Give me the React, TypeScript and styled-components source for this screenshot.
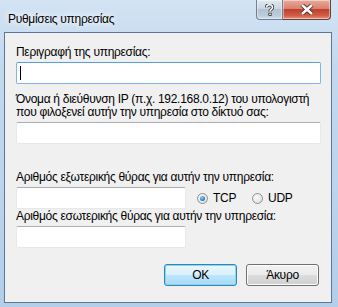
import React from "react";
import styled, { createGlobalStyle } from "styled-components";

const GlobalStyle = createGlobalStyle`
  html, body {
    margin: 0;
    padding: 0;
    background: #b9d1ea;
  }
`;

const Frame = styled.div`
  width: 338px;
  height: 307px;
  box-sizing: border-box;
  padding: 0 6px 4px 4px;
  display: flex;
  flex-direction: column;
  background: linear-gradient(180deg, #d3e3f4 0%, #c4d9ef 20%, #bcd4ed 60%, #b4cde9 100%);
  font-family: "Liberation Sans", Arial, sans-serif;
  font-size: 12px;
  letter-spacing: -0.3px;
  color: #000;
`;

const TitleBar = styled.div`
  height: 32px;
  display: flex;
  justify-content: space-between;
  align-items: flex-start;
`;

const Title = styled.div`
  margin: 12px 0 0 4px;
  font-size: 12px;
  line-height: 14px;
  color: #000;
  text-shadow: 0 0 6px #fff, 0 0 8px #fff;
`;

const Caption = styled.div`
  display: flex;
  margin-right: 1px;
`;

const CapButton = styled.div<{ $close?: boolean }>`
  width: ${(p) => (p.$close ? 48 : 27)}px;
  height: 20px;
  box-sizing: border-box;
  display: flex;
  align-items: center;
  justify-content: center;
  border: 1px solid ${(p) => (p.$close ? "#6b3a3a" : "#6e7f93")};
  border-top: none;
  border-radius: ${(p) => (p.$close ? "0 0 4px 0" : "0 0 0 4px")};
  ${(p) => (p.$close ? "border-left: none;" : "")}
  box-shadow: inset 0 0 0 1px rgba(255, 255, 255, 0.45);
  background: ${(p) =>
    p.$close
      ? "linear-gradient(180deg, #e9a99c 0%, #d9826f 45%, #c0412c 50%, #cf5b43 80%, #e0957f 100%)"
      : "linear-gradient(180deg, #e0e8f1 0%, #cad6e3 45%, #b3c3d5 50%, #bccbdb 80%, #d0dbe7 100%)"};
`;

const Client = styled.div`
  flex: 1;
  box-sizing: border-box;
  border: 1px solid #5a7798;
  background: #f0f0f0;
  padding: 0 10px 0 11px;
  display: flex;
  flex-direction: column;
`;

const Label = styled.div<{ $mt: number }>`
  margin-top: ${(p) => p.$mt}px;
  line-height: 13px;
  white-space: nowrap;
`;

const TextBox = styled.div<{ $w?: number; $focus?: boolean }>`
  width: ${(p) => (p.$w ? `${p.$w}px` : "100%")};
  height: 22px;
  box-sizing: border-box;
  background: #fff;
  border: 1px solid ${(p) => (p.$focus ? "#7eb4ea" : "#e3e9ef")};
  border-top-color: ${(p) => (p.$focus ? "#569de5" : "#abadb3")};
  border-radius: 2px;
  margin-top: 3px;
  display: flex;
  align-items: center;
  padding-left: 3px;
`;

const Caret = styled.div`
  width: 1px;
  height: 14px;
  background: #000;
`;

const PortRow = styled.div`
  display: flex;
  align-items: center;
  margin-top: 3px;
  & > ${TextBox} {
    margin-top: 0;
  }
`;

const Radio = styled.div`
  display: flex;
  align-items: center;
  gap: 5px;
  margin-left: 11px;
  & + & {
    margin-left: 16px;
  }
`;

const Dot = styled.div<{ $on?: boolean }>`
  width: 11px;
  height: 11px;
  box-sizing: border-box;
  border-radius: 50%;
  border: 1px solid #8e8f8f;
  background: radial-gradient(circle at 40% 35%, #fafafa 0%, #e4e4e4 70%, #d4d4d4 100%);
  display: flex;
  align-items: center;
  justify-content: center;
  &::after {
    content: "";
    display: ${(p) => (p.$on ? "block" : "none")};
    width: 5px;
    height: 5px;
    border-radius: 50%;
    background: radial-gradient(circle at 40% 35%, #8ad3ff 0%, #2c83c8 60%, #1a5d94 100%);
  }
`;

const Buttons = styled.div`
  display: flex;
  justify-content: flex-end;
  gap: 9px;
  margin-top: 16px;
  padding-right: 2px;
`;

const Button = styled.div<{ $default?: boolean }>`
  width: 73px;
  height: 22px;
  box-sizing: border-box;
  border-radius: 3px;
  display: flex;
  align-items: center;
  justify-content: center;
  border: 1px solid ${(p) => (p.$default ? "#3c7fb1" : "#707070")};
  box-shadow: inset 0 0 0 1px ${(p) => (p.$default ? "#7ddcf8" : "#fcfcfc")};
  background: ${(p) =>
    p.$default
      ? "linear-gradient(180deg, #eaf6fd 0%, #d9f0fc 50%, #bee6fd 50%, #a7d9f5 100%)"
      : "linear-gradient(180deg, #f2f2f2 0%, #ebebeb 50%, #dddddd 50%, #cfcfcf 100%)"};
`;

export default function App() {
  return (
    <>
      <GlobalStyle />
      <Frame>
        <TitleBar>
          <Title>Ρυθμίσεις υπηρεσίας</Title>
          <Caption>
            <CapButton>
              <svg width="9" height="12" viewBox="0 0 9 12">
                <path
                  d="M1.5 3.5 C1.5 1.5 3 0.8 4.5 0.8 C6.3 0.8 7.5 1.9 7.5 3.4 C7.5 5.3 5 5.5 5 7.5"
                  fill="none"
                  stroke="#333"
                  strokeWidth="3.2"
                />
                <path
                  d="M1.5 3.5 C1.5 1.5 3 0.8 4.5 0.8 C6.3 0.8 7.5 1.9 7.5 3.4 C7.5 5.3 5 5.5 5 7.5"
                  fill="none"
                  stroke="#fff"
                  strokeWidth="1.6"
                />
                <rect x="3.4" y="8.8" width="3.2" height="3" fill="#333" />
                <rect x="4.2" y="9.6" width="1.6" height="1.4" fill="#fff" />
              </svg>
            </CapButton>
            <CapButton $close>
              <svg width="14" height="11" viewBox="0 0 14 11">
                <path d="M2 1 L12 10 M12 1 L2 10" stroke="#4a1a14" strokeWidth="4.2" />
                <path d="M2 1 L12 10 M12 1 L2 10" stroke="#fff" strokeWidth="2.6" />
              </svg>
            </CapButton>
          </Caption>
        </TitleBar>
        <Client>
          <Label $mt={13}>Περιγραφή της υπηρεσίας:</Label>
          <TextBox $focus>
            <Caret />
          </TextBox>
          <Label $mt={9}>
            Όνομα ή διεύθυνση IP (π.χ. 192.168.0.12) του υπολογιστή
            <br />
            που φιλοξενεί αυτήν την υπηρεσία στο δίκτυό σας:
          </Label>
          <TextBox />
          <Label $mt={27}>Αριθμός εξωτερικής θύρας για αυτήν την υπηρεσία:</Label>
          <PortRow>
            <TextBox $w={170} />
            <Radio>
              <Dot $on />
              TCP
            </Radio>
            <Radio>
              <Dot />
              UDP
            </Radio>
          </PortRow>
          <Label $mt={1}>Αριθμός εσωτερικής θύρας για αυτήν την υπηρεσία:</Label>
          <TextBox $w={170} />
          <Buttons>
            <Button $default>OK</Button>
            <Button>Άκυρο</Button>
          </Buttons>
        </Client>
      </Frame>
    </>
  );
}
